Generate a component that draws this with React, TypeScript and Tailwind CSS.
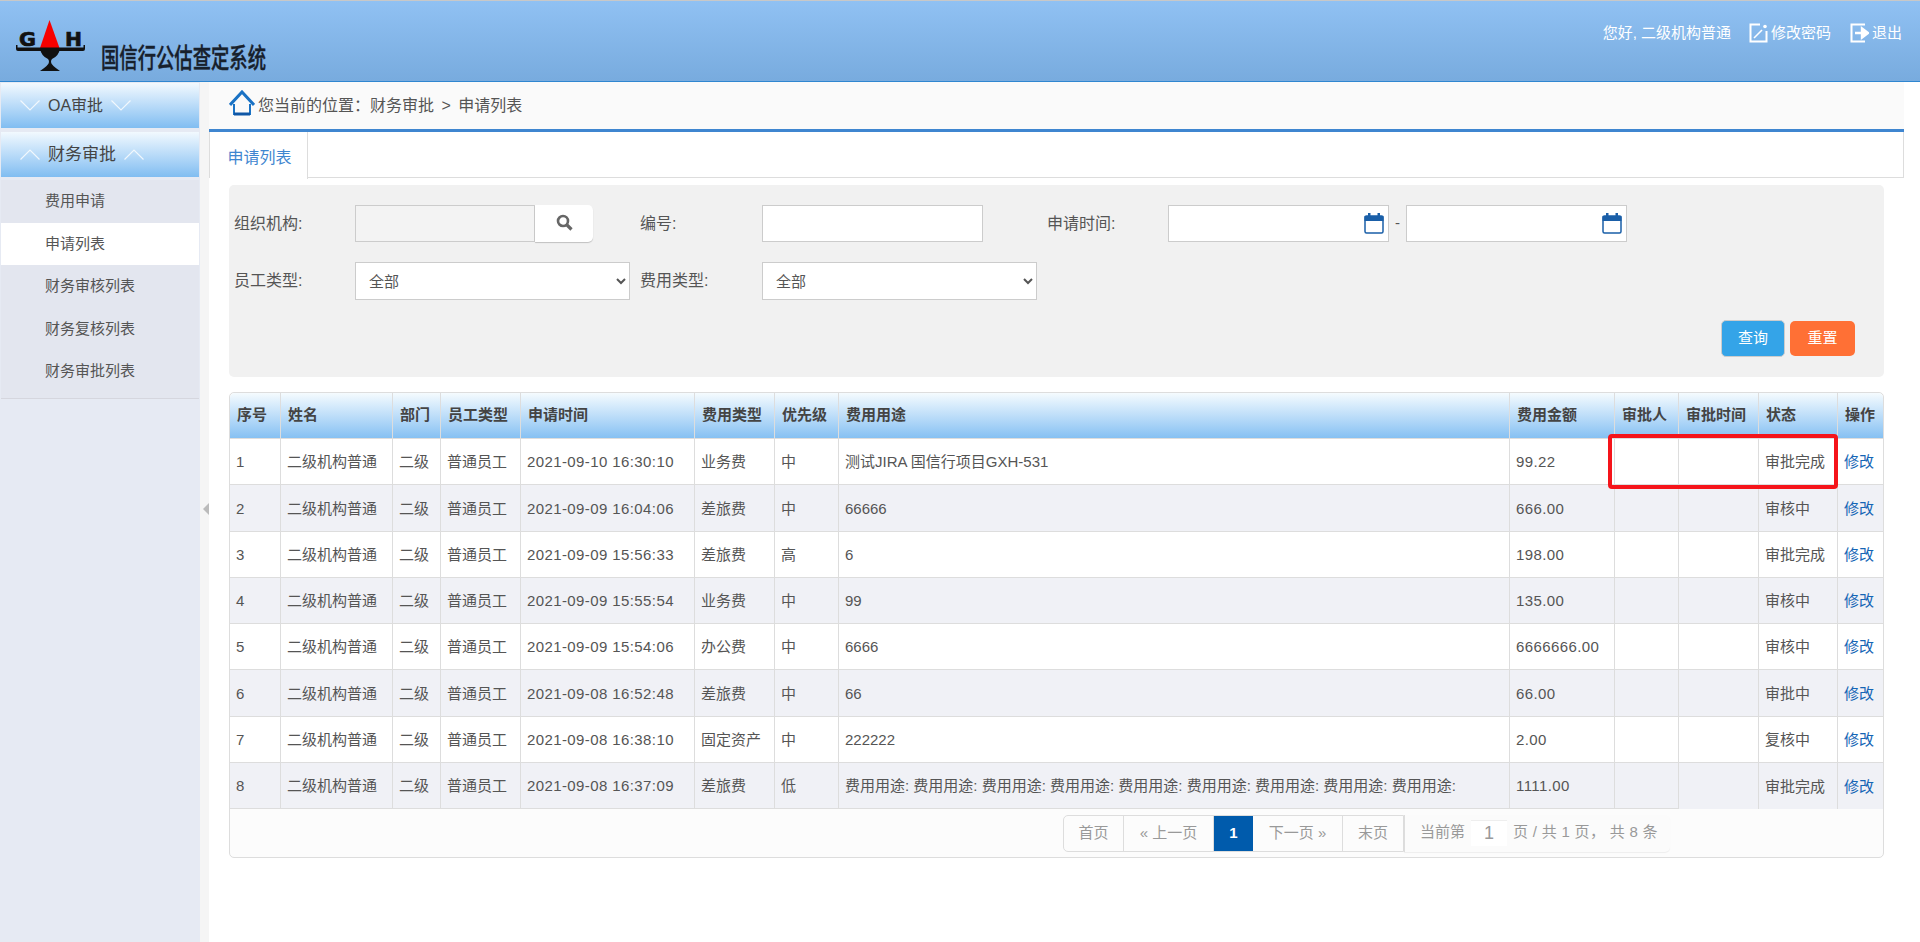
import React from 'react';

const rows = [
  ['1', '2021-09-10 16:30:10', '业务费', '中', '测试JIRA 国信行项目GXH-531', '99.22', '审批完成'],
  ['2', '2021-09-09 16:04:06', '差旅费', '中', '66666', '666.00', '审核中'],
  ['3', '2021-09-09 15:56:33', '差旅费', '高', '6', '198.00', '审批完成'],
  ['4', '2021-09-09 15:55:54', '业务费', '中', '99', '135.00', '审核中'],
  ['5', '2021-09-09 15:54:06', '办公费', '中', '6666', '6666666.00', '审核中'],
  ['6', '2021-09-08 16:52:48', '差旅费', '中', '66', '66.00', '审批中'],
  ['7', '2021-09-08 16:38:10', '固定资产', '中', '222222', '2.00', '复核中'],
  ['8', '2021-09-08 16:37:09', '差旅费', '低', '费用用途: 费用用途: 费用用途: 费用用途: 费用用途: 费用用途: 费用用途: 费用用途: 费用用途:', '1111.00', '审批完成'],
];

const headers = ['序号', '姓名', '部门', '员工类型', '申请时间', '费用类型', '优先级', '费用用途', '费用金额', '审批人', '审批时间', '状态', '操作'];
const colWidths = ['w-[51px]', 'w-[112px]', 'w-[48px]', 'w-[80px]', 'w-[174px]', 'w-[80px]', 'w-[64px]', 'w-[671px]', 'w-[105px]', 'w-[64px]', 'w-[80px]', 'w-[79px]', 'w-[45px]'];
const subMenu = ['费用申请', '申请列表', '财务审核列表', '财务复核列表', '财务审批列表'];

const Chevron = ({ up }: { up?: boolean }) => (
  <svg width="20" height="11" viewBox="0 0 20 11" fill="none" stroke="#fff" strokeWidth="1.2" className="shrink-0 opacity-80">
    <polyline points={up ? '0.5,10.5 10,1 19.5,10.5' : '0.5,0.5 10,10 19.5,0.5'} />
  </svg>
);

const Calendar = () => (
  <svg width="20" height="21" viewBox="0 0 20 21" className="absolute right-[4px] top-[7px]">
    <rect x="1" y="3" width="18" height="17" rx="1.5" fill="#fff" stroke="#1a5fa8" strokeWidth="1.5" />
    <rect x="0.5" y="3" width="19" height="5" fill="#1a5fa8" />
    <rect x="4" y="0" width="2.5" height="5" fill="#1a5fa8" />
    <rect x="13.5" y="0" width="2.5" height="5" fill="#1a5fa8" />
  </svg>
);

const Logo = () => (
  <svg width="350" height="80" viewBox="0 0 350 80" className="block shrink-0">
    <text x="19" y="45" fontFamily="'DejaVu Sans', sans-serif" fontWeight="700" fontSize="20" fill="#111" stroke="#111" strokeWidth="0.7" textLength="17" lengthAdjust="spacingAndGlyphs">G</text>
    <text x="65" y="45" fontFamily="'DejaVu Sans', sans-serif" fontWeight="700" fontSize="20" fill="#111" stroke="#111" strokeWidth="0.7" textLength="17" lengthAdjust="spacingAndGlyphs">H</text>
    <polygon points="49.5,19 59.5,47 40,47" fill="#f80000" />
    <path d="M16 44 h1.5 v2.5 h66 v-2.5 h1.5 v4 q0 2 -2 2 h-65 q-2 0 -2 -2 z" fill="#111" />
    <path d="M40 47 h20 q-1 8 -8 11 q-1 1 -1 3 q0 3 9 9 h-20 q9 -6 9 -9 q0 -2 -1 -3 q-7 -3 -8 -11 z" fill="#111" />
    <text x="101" y="67" fontFamily="'Noto Sans CJK SC', sans-serif" fontWeight="500" fontSize="27" fill="#17202c" stroke="#17202c" strokeWidth="0.4" textLength="165" lengthAdjust="spacingAndGlyphs">国信行公估查定系统</text>
  </svg>
);

export default function App() {
  return (
    <div className="flex h-screen w-full flex-col overflow-hidden bg-white font-['Liberation_Sans','Noto_Sans_CJK_SC',sans-serif] text-[15px] text-[#555]">
      <header className="flex h-[82px] shrink-0 items-start justify-between border-t border-b border-t-[#c8c8c8] border-b-[#2f86d0] bg-gradient-to-b from-[#90c1f3] to-[#78abde] text-white">
        <Logo />
        <div className="flex items-center pr-[18px] pt-[21px] leading-[22px]">
          <span>您好, 二级机构普通</span>
          <svg width="19" height="20" viewBox="0 0 19 20" fill="none" className="ml-[18px] mr-[3px]">
            <path d="M11 1.5 H1.5 V18.5 H17.5 V8" stroke="#fff" strokeWidth="2" />
            <path d="M5 15 L13 7" stroke="#fff" strokeWidth="1.6" />
            <circle cx="16" cy="3.5" r="1.8" fill="#fff" />
          </svg>
          <span>修改密码</span>
          <svg width="19" height="20" viewBox="0 0 19 20" fill="none" className="ml-[19px] mr-[3px]">
            <path d="M15 1.5 H1.5 V18.5 H15" stroke="#fff" strokeWidth="2" />
            <path d="M5 10 H12 M12 5.5 L18 10 L12 14.5 Z" stroke="#fff" strokeWidth="2.4" fill="#fff" />
          </svg>
          <span>退出</span>
        </div>
      </header>

      <div className="flex min-h-0 flex-1">
        <aside className="flex w-[200px] shrink-0 flex-col bg-[#e6eaf3] pt-[1px]">
          <div className="mx-[1px] flex h-[45px] items-center gap-[8px] bg-gradient-to-b from-[#f2f9fe] to-[#80bdf1] pl-[19px] text-[16px]">
            <Chevron />
            <span className="text-[#444]">OA审批</span>
            <Chevron />
          </div>
          <div className="mx-[1px] mt-[4px] flex h-[45px] items-center gap-[8px] bg-gradient-to-b from-[#f2f9fe] to-[#80bdf1] pl-[19px] text-[17px]">
            <Chevron up />
            <span className="text-[#444]">财务审批</span>
            <Chevron up />
          </div>
          <div className="mx-[1px] mt-[3px] border-b border-[#d5d6de] bg-[#e3e6ef] pb-[5px]">
            {subMenu.map(item => (
              <div key={item} className={`flex h-[42.5px] items-center pl-[44px] ${item === '申请列表' ? 'bg-white' : ''}`}>
                {item}
              </div>
            ))}
          </div>
        </aside>

        <div className="flex w-[9px] shrink-0 items-center justify-end bg-[#f5f5f5] pb-[6px]">
          <div className="h-0 w-0 border-y-[6px] border-r-[6px] border-y-transparent border-r-[#bbb]" />
        </div>

        <main className="w-[1695px] shrink-0">
          <div className="flex h-[47px] items-center gap-[3px] bg-[#fafafa] pl-[20px] text-[16px]">
            <svg width="26" height="26" viewBox="0 0 26 26" fill="none" className="-mt-[6px] shrink-0">
              <polyline points="1,15 13,2 25,15" stroke="#1a72c4" strokeWidth="3" />
              <path d="M5 14 V24 H21 V14" stroke="#1a72c4" strokeWidth="2" />
              <path d="M5 24 H21" stroke="#0f57a6" strokeWidth="3" />
            </svg>
            <span>您当前的位置：财务审批<span className="mx-[3px]"> &gt; </span>申请列表</span>
          </div>
          <div className="h-[3px] bg-[#3f86d0]" />

          <div className="flex h-[46px] border-x border-b border-[#ddd]">
            <div className="-mb-[2px] flex w-[98px] items-center justify-center border-r border-[#ddd] bg-white pt-[4px] pl-[2px] text-[16px] text-[#3f86d0]">
              申请列表
            </div>
          </div>

          <div className="px-[20px] pt-[7px]">
            <section className="rounded-[5px] bg-[#f1f1f1] pr-[29px] pl-[5px] pt-[20px] pb-[20px]">
              <div className="flex h-[37px] items-center">
                <label className="w-[121px] text-[16px]">组织机构:</label>
                <input disabled className="h-full w-[180px] border border-[#ccc] bg-[#f3f3f3]" />
                <button className="flex h-full w-[58px] items-center justify-center rounded-r-[5px] bg-white pb-[2px] shadow-[0_1px_1px_rgba(0,0,0,0.2)]">
                  <svg width="17" height="17" viewBox="0 0 17 17" fill="none" stroke="#666">
                    <circle cx="7" cy="7" r="5" strokeWidth="2.6" />
                    <path d="M11 11 L15.5 15.5" strokeWidth="3.2" />
                  </svg>
                </button>
                <label className="ml-[47px] w-[122px] text-[16px]">编号:</label>
                <input className="h-full w-[221px] border border-[#ccc] bg-white" />
                <label className="ml-[64px] w-[121px] text-[16px]">申请时间:</label>
                <div className="relative h-full w-[221px] border border-[#ccc] bg-white">
                  <Calendar />
                </div>
                <span className="w-[17px] text-center">-</span>
                <div className="relative h-full w-[221px] border border-[#ccc] bg-white">
                  <Calendar />
                </div>
              </div>

              <div className="mt-[20px] flex h-[38px] items-center">
                <label className="w-[121px] text-[16px]">员工类型:</label>
                <select className="h-full w-[275px] border border-[#ccc] bg-white pl-[9px] text-[#555]">
                  <option>全部</option>
                </select>
                <label className="ml-[10px] w-[122px] text-[16px]">费用类型:</label>
                <select className="h-full w-[275px] border border-[#ccc] bg-white pl-[9px] text-[#555]">
                  <option>全部</option>
                </select>
              </div>

              <div className="mt-[20px] flex h-[37px] justify-end gap-[5px]">
                <button className="w-[64px] rounded-[5px] border border-[#ccc] bg-[#34a4e8] text-white">查询</button>
                <button className="my-[1px] w-[65px] rounded-[5px] bg-[#ff7035] text-white">重置</button>
              </div>
            </section>

            <section className="relative mt-[15px] h-[466px] w-[1655px] rounded-[5px] border border-[#ddd] bg-[#fcfcfc]">
              <table className="w-[1653px] table-fixed border-separate border-spacing-0 overflow-hidden rounded-t-[5px]">
                <colgroup>
                  {colWidths.map((w, i) => <col key={i} className={w} />)}
                </colgroup>
                <thead>
                  <tr className="h-[46px] bg-gradient-to-b from-[#f5fbfe] to-[#83bff2]">
                    {headers.map((h, i) => (
                      <th key={h} className={`border-b border-[#ddd] pl-[7px] text-left font-bold whitespace-nowrap text-[#444] ${i < 12 ? 'border-r' : ''}`}>{h}</th>
                    ))}
                  </tr>
                </thead>
                <tbody>
                  {rows.map((r, idx) => {
                    const last = idx === rows.length - 1;
                    const cell = 'border-r border-b border-[#ddd] pt-[2px] pl-[6px] whitespace-nowrap';
                    const open = `border-r border-[#ddd] pt-[2px] pl-[6px] whitespace-nowrap ${last ? '' : 'border-b'}`;
                    return (
                      <tr key={r[0]} className={`h-[46.25px] ${idx % 2 === 1 ? 'bg-[#f0f1f6]' : 'bg-white'}`}>
                        <td className={cell}>{r[0]}</td>
                        <td className={cell}>二级机构普通</td>
                        <td className={cell}>二级</td>
                        <td className={cell}>普通员工</td>
                        <td className={`${cell} tracking-[0.4px]`}>{r[1]}</td>
                        <td className={cell}>{r[2]}</td>
                        <td className={cell}>{r[3]}</td>
                        <td className={cell}>{r[4]}</td>
                        <td className={`${cell} tracking-[0.4px]`}>{r[5]}</td>
                        <td className={cell}></td>
                        <td className={open}></td>
                        <td className={open}>{r[6]}</td>
                        <td className={`pt-[2px] pl-[6px] whitespace-nowrap border-[#ddd] text-[#1565b5] ${last ? '' : 'border-b'}`}>修改</td>
                      </tr>
                    );
                  })}
                </tbody>
              </table>

              <div className="mt-[6px] ml-[833px] flex h-[37px] w-[608px] rounded-[5px] text-[#999]">
                <div className="flex h-full overflow-hidden rounded-l-[5px] border border-[#ddd]">
                  <span className="flex w-[60px] items-center justify-center border-r border-[#ddd]">首页</span>
                  <span className="flex w-[90px] items-center justify-center border-r border-[#ddd]">« 上一页</span>
                  <span className="flex w-[39px] items-center justify-center bg-[#005bac] font-bold text-white">1</span>
                  <span className="flex w-[90px] items-center justify-center border-r border-[#ddd]">下一页 »</span>
                  <span className="flex w-[60px] items-center justify-center">末页</span>
                </div>
                <div className="flex w-[266px] items-center rounded-r-[5px] border-l border-[#ddd] bg-[#fbfbfb] pb-[2px] pl-[15px] shadow-[0_1px_1px_rgba(0,0,0,0.06)]">
                  <span>当前第</span>
                  <span className="mx-[6px] flex h-[26px] w-[36px] items-center justify-center border-t border-[#eee] bg-white text-[18px]">1</span>
                  <span className="tracking-[0.3px]">页 / 共 1 页， 共 8 条</span>
                </div>
              </div>

              <div className="absolute left-[1378px] top-[41px] h-[55px] w-[230px] rounded-[4px] border-[4px] border-[#f5141a]" />
            </section>
          </div>
        </main>
      </div>
    </div>
  );
}
